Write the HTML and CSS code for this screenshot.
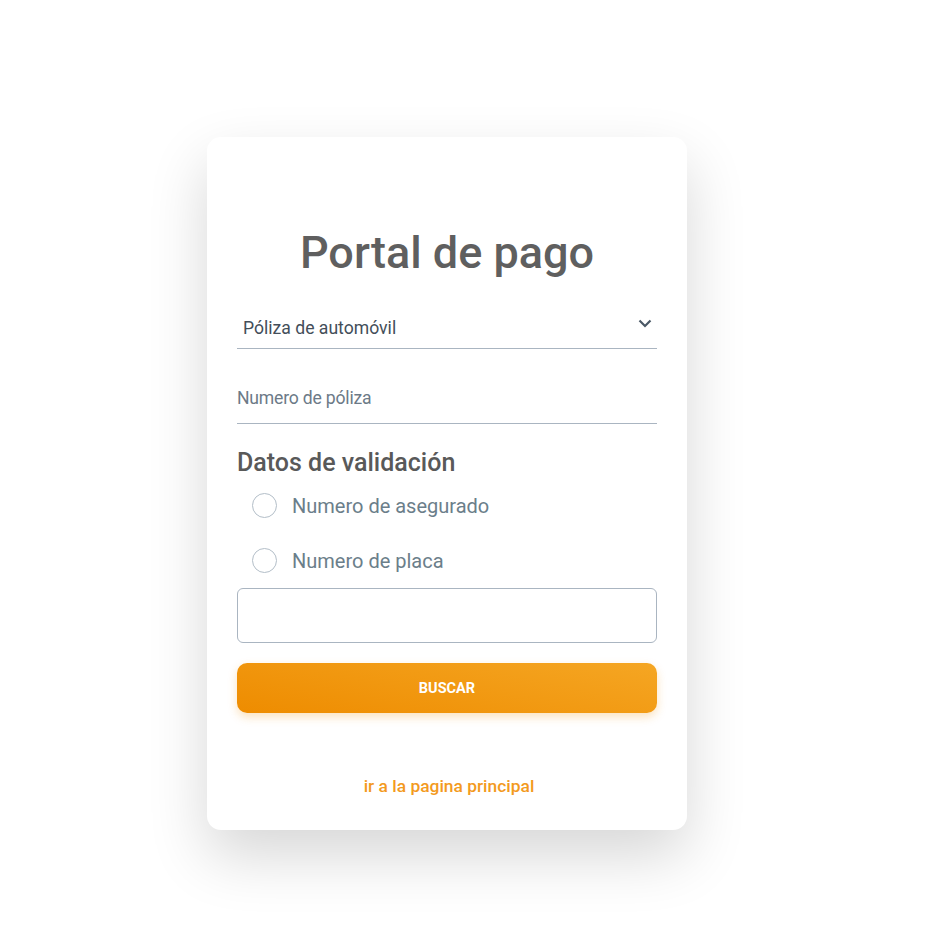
FILE: index.html
```html
<!DOCTYPE html>
<html lang="es">
<head>
<meta charset="utf-8">
<title>Portal de pago</title>
<link rel="stylesheet" href="styles.css">
</head>
<body>
<div class="page">
  <div class="card">
    <h1 class="title">Portal de pago</h1>
    <div class="select">
      <span class="select-text">Póliza de automóvil</span>
      <svg class="chevron" width="14" height="9" viewBox="0 0 14 9"><path d="M1.5 1.5 L7 7 L12.5 1.5" fill="none" stroke="#4a5866" stroke-width="2.2"/></svg>
    </div>
    <div class="field">
      <span class="placeholder">Numero de póliza</span>
    </div>
    <h2 class="subtitle">Datos de validación</h2>
    <div class="radios">
      <label class="radio"><span class="circle"></span><span class="radio-label">Numero de asegurado</span></label>
      <label class="radio"><span class="circle"></span><span class="radio-label">Numero de placa</span></label>
    </div>
    <div class="textbox"></div>
    <button class="btn">BUSCAR</button>
    <a class="link" href="#">ir a la pagina principal</a>
  </div>
</div>
</body>
</html>
```

FILE: styles.css
```css
* { box-sizing: border-box; }
html, body { margin: 0; padding: 0; background: #fff; }
body { font-family: Roboto, "Noto Sans", Arial, sans-serif; }
.page { padding: 137px 0 95px 207px; min-height: 925px; }
.card {
  width: 480px;
  background: #fff;
  border-radius: 14px;
  box-shadow: 0 26px 60px rgba(0,0,0,0.16);
  padding: 89px 30px 32px;
  display: flex;
  flex-direction: column;
}
.title {
  margin: 0;
  font-size: 45px;
  line-height: 54px;
  font-weight: 500;
  color: #5f5f5f;
  text-align: center;
}
.select {
  margin-top: 32px;
  padding: 4px 5px 8px 6px;
  border-bottom: 1px solid #aab5c1;
  display: flex;
  justify-content: space-between;
  align-items: flex-start;
}
.select-text {
  font-size: 17.6px;
  line-height: 24px;
  color: #434e59;
}
.chevron { margin-top: 3px; }
.field {
  margin-top: 26px;
  padding: 11px 0 13px;
  border-bottom: 1px solid #aab5c1;
}
.placeholder {
  display: block;
  font-size: 17.6px;
  line-height: 24px;
  color: #6c7a87;
  letter-spacing: -0.2px;
}
.subtitle {
  margin: 24px 0 0;
  font-size: 25px;
  line-height: 30px;
  font-weight: 500;
  color: #595959;
}
.radios {
  margin-top: 7px;
  display: flex;
  flex-direction: column;
  gap: 15px;
}
.radio {
  height: 40px;
  display: flex;
  align-items: center;
  padding-left: 15px;
  gap: 15px;
}
.circle {
  width: 25px;
  height: 25px;
  border-radius: 50%;
  border: 1px solid #b3bec8;
  flex: none;
}
.radio-label {
  font-size: 20px;
  line-height: 24px;
  color: #6b7e8a;
  padding-top: 2px;
}
.textbox {
  margin-top: 8px;
  height: 55px;
  border: 1px solid #aab5c1;
  border-radius: 6px;
}
.btn {
  margin-top: 20px;
  height: 50px;
  border: none;
  border-radius: 10px;
  background: linear-gradient(12deg, #ee8c00 0%, #f5a623 100%);
  box-shadow: 0 4px 10px rgba(240,150,20,0.28);
  color: #fff;
  font-family: Roboto, Arial, sans-serif;
  font-weight: 700;
  font-size: 14.5px;
  letter-spacing: 0;
}
.link {
  margin-top: 61px;
  padding-left: 4px;
  font-size: 17.4px;
  line-height: 24px;
  font-weight: 500;
  color: #f39a1e;
  text-align: center;
  text-decoration: none;
}
```
